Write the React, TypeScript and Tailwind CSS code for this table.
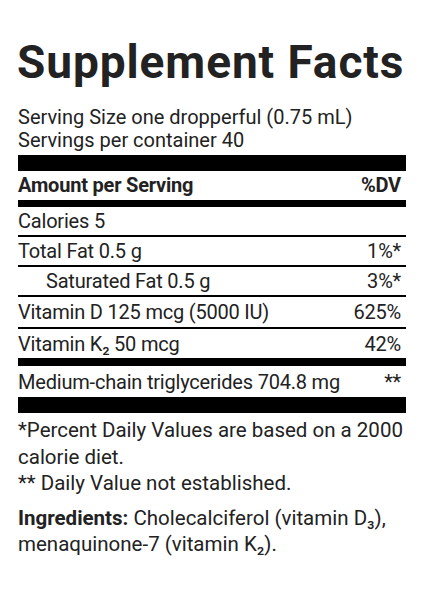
import React from "react";

interface Row {
  label: string;
  dv?: string;
  indent?: boolean;
  tall?: boolean;
}

const rows: Row[] = [
  { label: "Calories 5" },
  { label: "Total Fat 0.5 g", dv: "1%*" },
  { label: "Saturated Fat 0.5 g", dv: "3%*", indent: true },
  { label: "Vitamin D 125 mcg (5000 IU)", dv: "625%", tall: true },
];

export default function App() {
  return (
    <div className="w-[424px] h-[600px] bg-white px-[18px] pt-[34px] text-[#222222] font-['Roboto',sans-serif]">
      {/* Title */}
      <h1 className="text-[46px] font-bold leading-[56px] tracking-[0.02em] -ml-[1px]">Supplement Facts</h1>
      <div className="mt-[16px] text-[20px] leading-[23px]">
        <p>Serving Size one dropperful (0.75 mL)</p>
        <p>Servings per container 40</p>
      </div>

      <div className="h-[16px] bg-black mt-[3px]" />
      <div className="flex justify-between items-end pr-[5px] pb-[3px] h-[29px] text-[20px] font-bold leading-[24px] tracking-[-0.01em]">
        <span>Amount per Serving</span>
        <span>%DV</span>
      </div>
      <div className="h-[7px] bg-black" />

      {rows.map((r) => (
        <div
          key={r.label}
          className={`flex justify-between items-center pr-[5px] text-[20px] leading-[24px] tracking-[-0.01em] border-b-2 border-black ${r.tall ? "h-[32px]" : "h-[30px]"}`}
        >
          <span className={r.indent ? "pl-[28px]" : ""}>{r.label}</span>
          {r.dv && <span>{r.dv}</span>}
        </div>
      ))}
      <div className="flex justify-between items-center pr-[5px] h-[29px] text-[20px] leading-[24px] tracking-[-0.01em]">
        <span>Vitamin K₂ 50 mcg</span>
        <span>42%</span>
      </div>
      <div className="h-[8px] bg-black" />
      <div className="flex justify-between items-center pr-[5px] h-[31px] text-[20px] leading-[24px] tracking-[-0.01em]">
        <span>Medium-chain triglycerides 704.8 mg</span>
        <span>**</span>
      </div>
      <div className="h-[16px] bg-black" />

      {/* Footnotes */}
      <div className="pt-[4px] text-[20.5px] leading-[26.5px]">
        <p>*Percent Daily Values are based on a 2000 calorie diet.</p>
        <p>** Daily Value not established.</p>
        <p className="mt-[8px]">
          <span className="font-bold">Ingredients:</span> Cholecalciferol (vitamin D₃), menaquinone-7 (vitamin K₂).
        </p>
      </div>
    </div>
  );
}
